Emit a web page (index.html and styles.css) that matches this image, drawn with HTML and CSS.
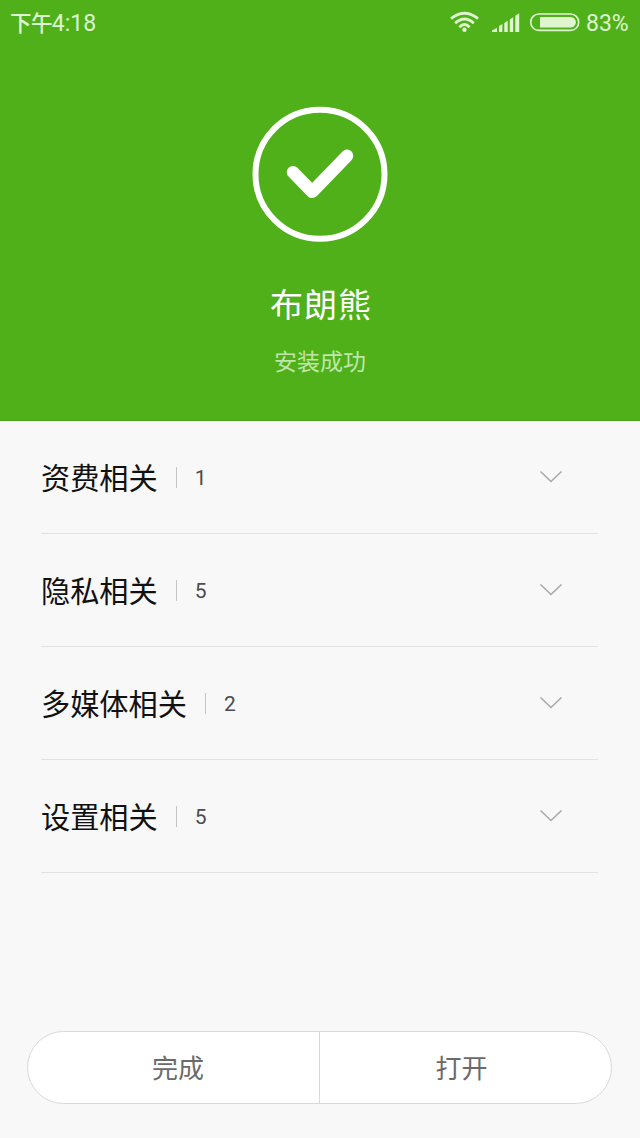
FILE: index.html
```html
<!DOCTYPE html>
<html lang="zh-CN">
<head>
<meta charset="utf-8">
<title>安装成功</title>
<link rel="stylesheet" href="styles.css">
</head>
<body>
<main class="screen">
  <header class="hero">
    <div class="status">
      <span class="clock">下午<span class="digits">4:18</span></span>
      <svg class="indicators" width="130" height="24" viewBox="450 10 130 24">
        <g fill="none" stroke="#dff5d0" stroke-width="2.8">
          <path d="M451 18.6Q464.5 7.8 478 18.6"/>
          <path d="M455.2 23.2Q464.5 14.8 473.8 23.2"/>
          <path d="M459.4 27.2Q464.5 21.8 469.6 27.2"/>
        </g>
        <circle cx="464.5" cy="29.7" r="2.2" fill="#dff5d0"/>
        <path fill="#dff5d0" d="M492 32v-1.5l5-2.7V32zM499 32v-6l3.4-2v8zM504.3 32v-9l3.4-2.2V32zM509.8 32V19.5l3.4-2.2V32zM515.3 32V15.8l3.9-2.6V32z"/>
        <rect x="530.7" y="14" width="48" height="16.4" rx="8.2" fill="none" stroke="#dff5d0" stroke-width="1.6"/>
        <path fill="#dff5d0" d="M540 17h30.6a5.3 5.3 0 0 1 0 10.6H540z"/>
      </svg>
      <span class="percent">83%</span>
    </div>
    <svg class="badge" width="136" height="136" viewBox="252 106 136 136" fill="none" stroke="#fff">
      <circle cx="320" cy="174.2" r="64.5" stroke-width="6"/>
      <path d="M293 172.2L312.2 191.8L347 155.8" stroke-width="12.5" stroke-linecap="round" stroke-linejoin="round"/>
    </svg>
    <h1 class="app-name">布朗熊</h1>
    <p class="result">安装成功</p>
  </header>
  <ul class="groups">
    <li class="group"><span class="name">资费相关</span><span class="count">1</span><svg class="chevron" width="24" height="14" viewBox="0 0 24 14"><path d="M1.5 1.5L12 11.5L22.5 1.5"/></svg></li>
    <li class="group"><span class="name">隐私相关</span><span class="count">5</span><svg class="chevron" width="24" height="14" viewBox="0 0 24 14"><path d="M1.5 1.5L12 11.5L22.5 1.5"/></svg></li>
    <li class="group"><span class="name">多媒体相关</span><span class="count">2</span><svg class="chevron" width="24" height="14" viewBox="0 0 24 14"><path d="M1.5 1.5L12 11.5L22.5 1.5"/></svg></li>
    <li class="group"><span class="name">设置相关</span><span class="count">5</span><svg class="chevron" width="24" height="14" viewBox="0 0 24 14"><path d="M1.5 1.5L12 11.5L22.5 1.5"/></svg></li>
  </ul>
  <div class="actions">
    <button class="action">完成</button>
    <button class="action">打开</button>
  </div>
</main>
</body>
</html>
```

FILE: styles.css
```css
* { box-sizing: border-box; }
body { margin: 0; font-family: "Noto Sans CJK SC", sans-serif; }
.screen {
  display: flex;
  flex-direction: column;
  width: 640px;
  height: 1138px;
  background: #f8f8f8;
}
.hero {
  display: flex;
  flex-direction: column;
  align-items: center;
  height: 421px;
  background: #50b01a;
  border-bottom: 1px solid #48a018;
  color: #fff;
}
.status {
  display: flex;
  align-items: center;
  width: 100%;
  height: 44px;
  padding: 0 11px 0 10px;
  color: #dff5d0;
  font-size: 21.5px;
  line-height: 44px;
}
.clock { flex: 1; height: 44px; line-height: 44px; font-weight: 500; letter-spacing: -0.6px; white-space: nowrap; }
.digits, .percent, .count { font-family: Roboto, sans-serif; font-weight: 400; }
.digits { font-size: 23px; letter-spacing: 0; }
.indicators { flex: none; margin-right: 6px; }
.percent { width: 43px; height: 44px; font-size: 23px; line-height: 48px; white-space: nowrap; }
.badge { margin-top: 62px; }
.app-name {
  margin: 37px 0 0 2px;
  font-size: 33px;
  font-weight: 400;
  line-height: 48px;
  letter-spacing: 1px;
}
.result {
  margin: 16px 0 0;
  color: #bfe6a8;
  font-size: 23px;
  font-weight: 400;
  line-height: 34px;
}
.groups { list-style: none; margin: 0; padding: 0 42px 0 41px; }
.group {
  display: flex;
  align-items: center;
  height: 113px;
  border-bottom: 1px solid #e2e2e2;
}
.name { padding-bottom: 2px; color: #111; font-size: 29.2px; line-height: 44px; }
.count {
  height: 21px;
  margin-left: 18.5px;
  padding-left: 17.5px;
  border-left: 1px solid #c4c4c4;
  color: #4c4c4c;
  font-size: 21px;
  line-height: 23px;
}
.chevron {
  margin: 0 35px 0 auto;
  fill: none;
  stroke: #a9a9a9;
  stroke-width: 1.6;
}
.actions {
  display: grid;
  grid-template-columns: 291px 292px;
  width: 585px;
  height: 73px;
  margin: auto 0 34px 27px;
  border: 1px solid #d9d9d9;
  border-radius: 37px;
  background: #fff;
  overflow: hidden;
}
.action {
  padding: 0 0 1px 9px;
  border: 0;
  background: none;
  color: #6a6a6a;
  font: 400 26px/40px "Noto Sans CJK SC", sans-serif;
}
.action + .action { padding: 0 8px 1px 0; border-left: 1px solid #d9d9d9; }
```
